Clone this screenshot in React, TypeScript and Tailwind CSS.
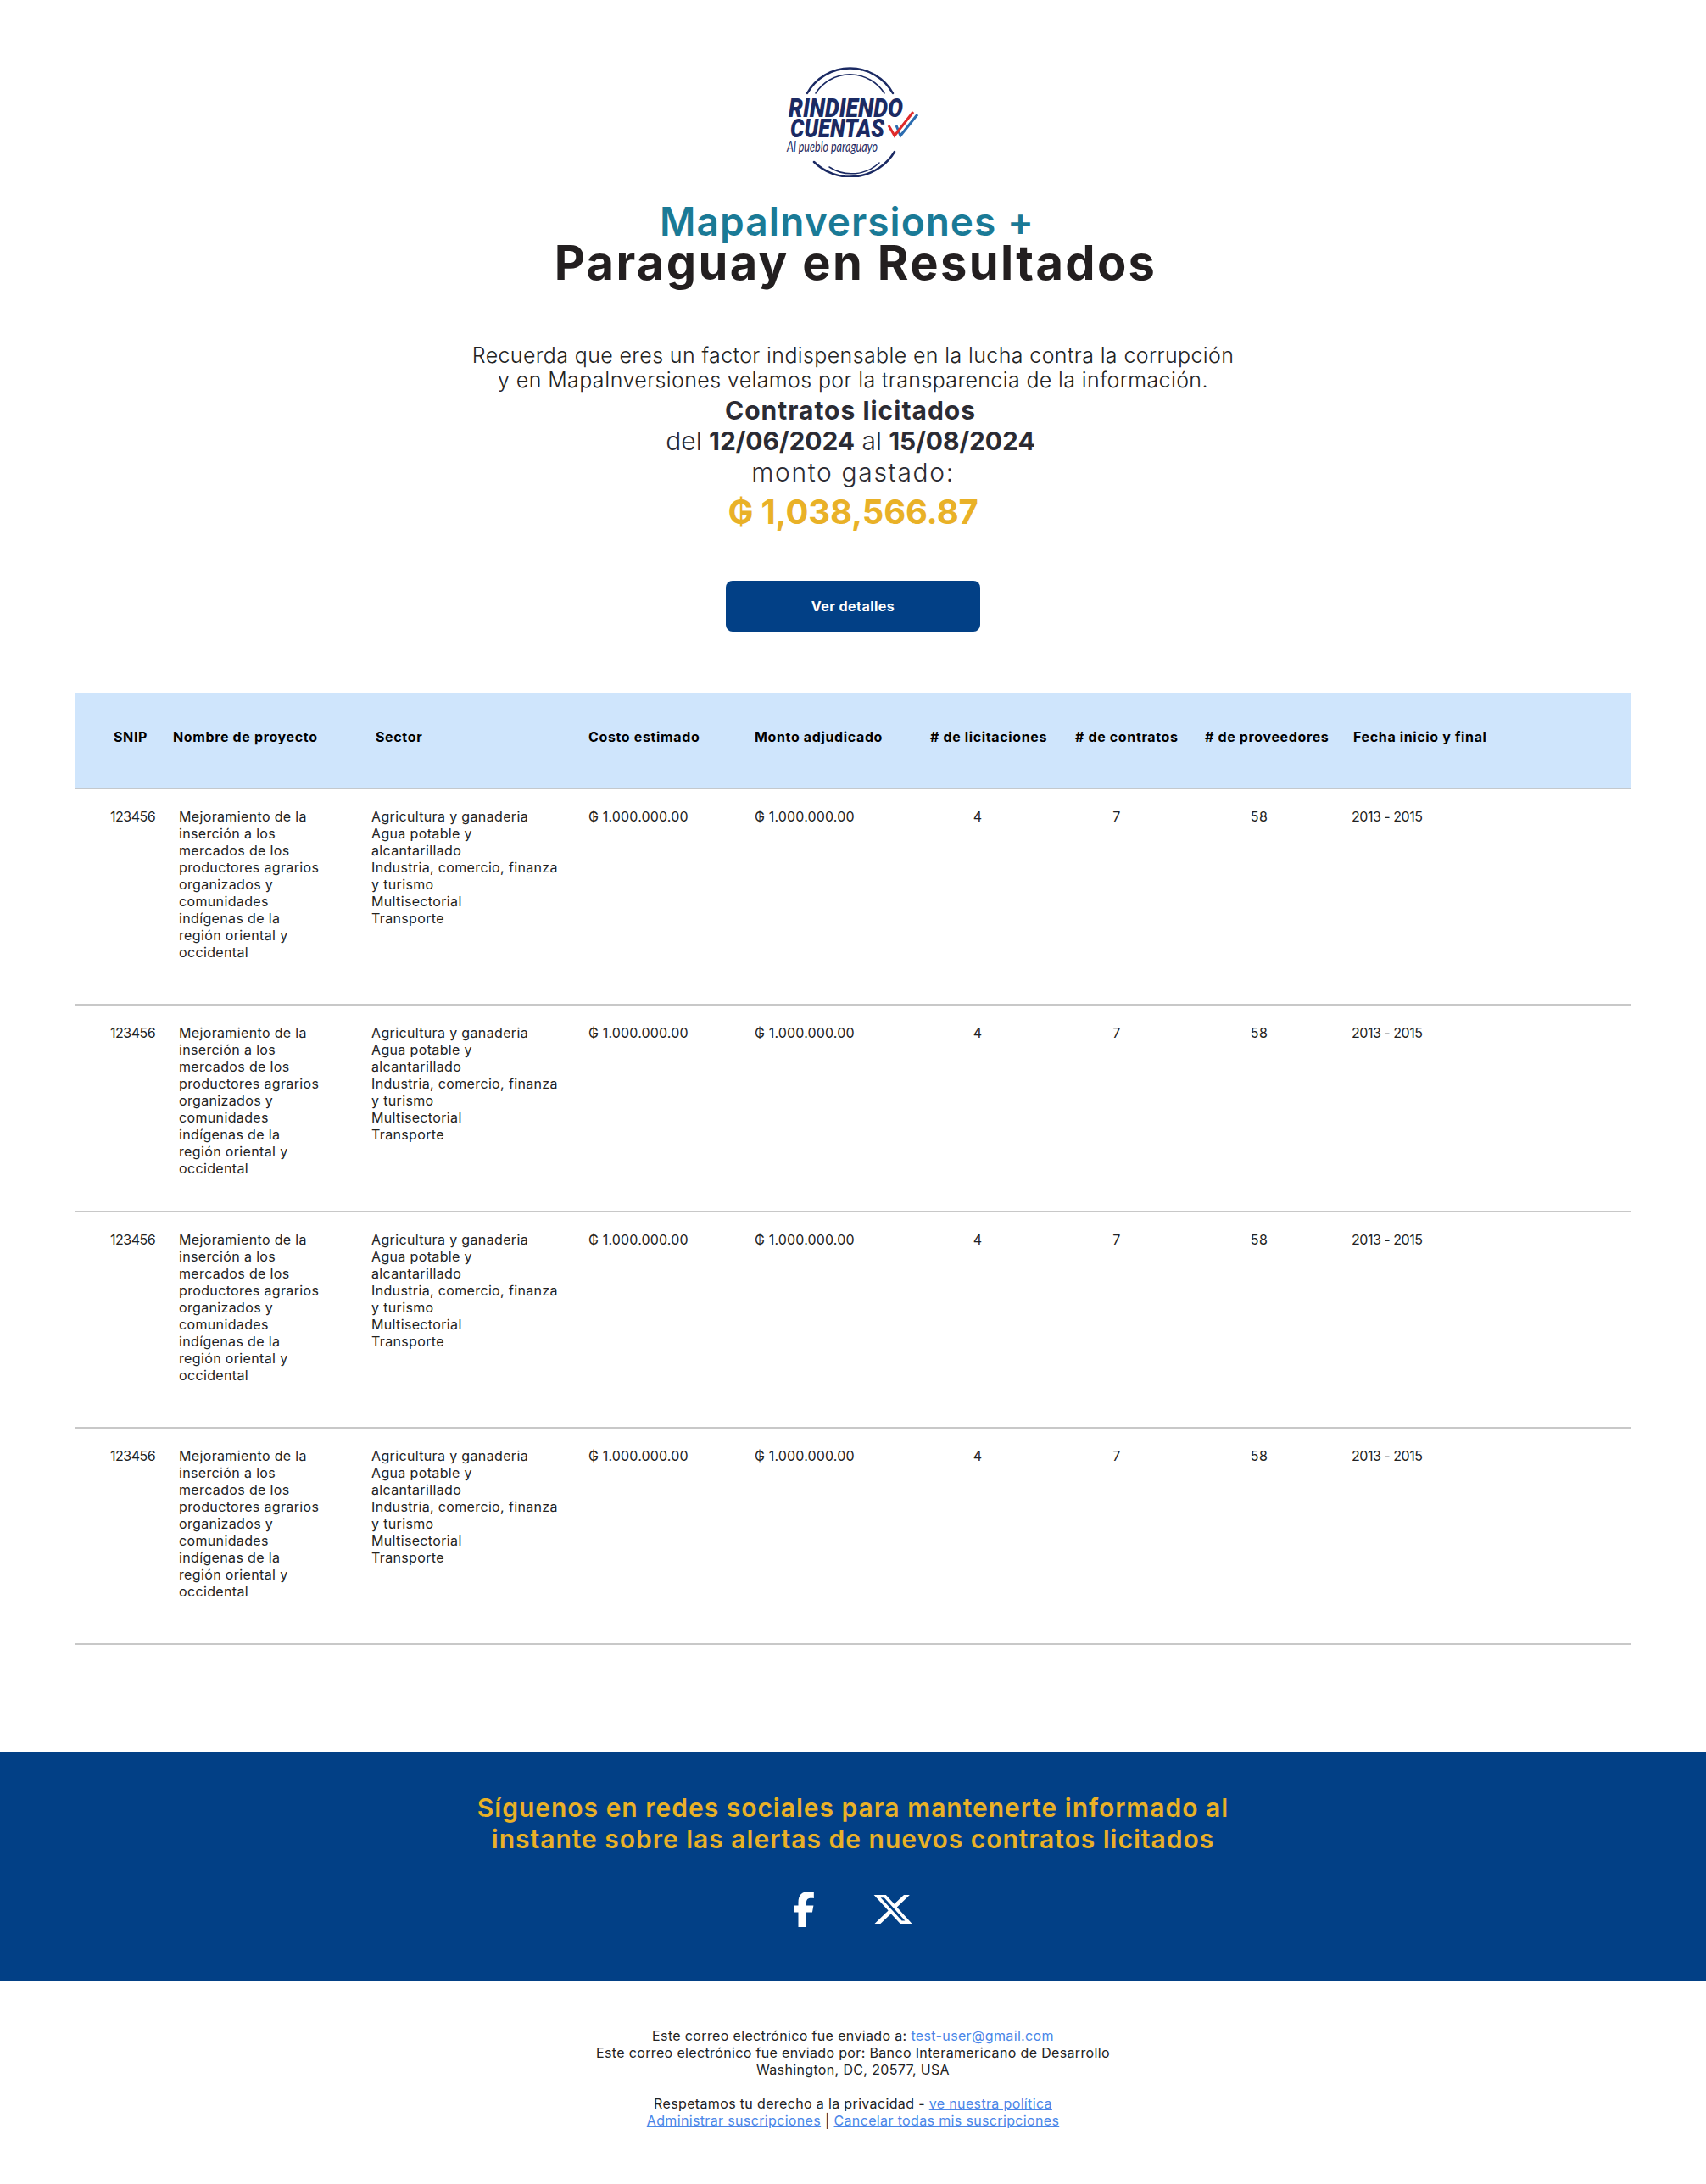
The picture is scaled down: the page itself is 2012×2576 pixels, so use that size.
import { FaFacebookF, FaXTwitter } from 'react-icons/fa6';

const projectLines = [
  'Mejoramiento de la',
  'inserción a los',
  'mercados de los',
  'productores agrarios',
  'organizados y',
  'comunidades',
  'indígenas de la',
  'región oriental y',
  'occidental',
];

const sectorLines = [
  'Agricultura y ganaderia',
  'Agua potable y',
  'alcantarillado',
  'Industria, comercio, finanza',
  'y turismo',
  'Multisectorial',
  'Transporte',
];

const rowHeights = ['h-[255px]', 'h-[244px]', 'h-[255px]', 'h-[255px]'];

const gridCols = 'grid grid-cols-[116px_234px_256px_196px_207px_171px_153px_173px_330px]';

function Logo() {
  return (
    <svg width="180" height="136" viewBox="-10 0 180 136" className="mx-auto block">
      <g fill="none" stroke="#1b2a63" strokeLinecap="round">
        <path d="M26 37 A58 58 0 0 1 127 37" strokeWidth="2.5" />
        <path d="M36 37 A48 48 0 0 1 117 37" strokeWidth="1.5" />
        <path d="M34 118 A61 61 0 0 0 129 106" strokeWidth="2.5" />
        <path d="M52 124 A48 48 0 0 0 111 119" strokeWidth="1.5" />
      </g>
      <g fill="#1b2a63" fontFamily="Roboto, sans-serif" fontWeight="900" fontStyle="italic">
        <text x="4" y="65" fontSize="32" textLength="135" lengthAdjust="spacingAndGlyphs">RINDIENDO</text>
        <text x="6" y="89" fontSize="32" textLength="111" lengthAdjust="spacingAndGlyphs">CUENTAS</text>
      </g>
      <text x="2" y="106" fill="#1b2a63" fontFamily="Lato, sans-serif" fontStyle="italic" fontWeight="400" fontSize="18" textLength="107" lengthAdjust="spacingAndGlyphs">Al pueblo paraguayo</text>
      <path d="M131 75 L136 87 L156 62" fill="none" stroke="#2b6cb0" strokeWidth="3" />
      <path d="M122 75 L129 87 L151 59" fill="none" stroke="#e02b2b" strokeWidth="3" />
    </svg>
  );
}

function TableRow({ height }: { height: string }) {
  return (
    <div className={`${gridCols} ${height} border-b-2 border-[#c8c8c8] pt-[22px] text-[16px] leading-5 tracking-[0.022em] text-[#222]`}>
      <div className="pl-[42px] tracking-[-0.03em]">123456</div>
      <div className="pl-[7px]">
        {projectLines.map((line) => (
          <div key={line}>{line}</div>
        ))}
      </div>
      <div>
        {sectorLines.map((line) => (
          <div key={line}>{line}</div>
        ))}
      </div>
      <div className="tracking-[0.01em]">₲ 1.000.000.00</div>
      <div className="tracking-[0.01em]">₲ 1.000.000.00</div>
      <div className="w-[112px] text-center">4</div>
      <div className="w-[98px] text-center">7</div>
      <div className="w-[128px] text-center">58</div>
      <div className="tracking-[-0.03em]">2013 - 2015</div>
    </div>
  );
}

export default function App() {
  return (
    <div className="min-h-[2576px] bg-white font-['Inter',sans-serif] text-[#222]">
      <header className="pt-[73px] text-center">
        <Logo />
        <h1 className="mt-[29px] pr-[14px] text-[46px] font-semibold leading-[46px] tracking-[0.022em] text-[#1a7a96]">MapaInversiones +</h1>
        <h2 className="pl-[6px] text-[56px] font-bold leading-[52px] tracking-[0.042em] text-[#231f20]">Paraguay en Resultados</h2>
        <p className="mt-[69px] text-[25px] font-light leading-[29px] tracking-[0.015em]">
          Recuerda que eres un factor indispensable en la lucha contra la corrupción
          <br />
          y en MapaInversiones velamos por la transparencia de la información.
        </p>
        <p className="mt-[3px] pr-[6px] text-[30px] font-bold leading-[36px] tracking-[0.033em] text-[#2b2b33]">Contratos licitados</p>
        <p className="pr-[6px] text-[30px] font-light leading-[36px] tracking-[-0.002em] text-[#2b2b33]">
          del <b className="font-bold">12/06/2024</b> al <b className="font-bold">15/08/2024</b>
        </p>
        <p className="mt-[1px] text-[30px] font-light leading-[37px] tracking-[0.055em] text-[#2b2b33]">monto gastado:</p>
        <p className="mt-[3px] text-[40px] font-bold leading-[50px] tracking-[-0.005em] text-[#e9b127]">₲ 1,038,566.87</p>
        <button className="mx-auto mt-[56px] block h-[60px] w-[300px] rounded-lg bg-[#024086] text-[16px] font-bold tracking-[0.03em] text-white">Ver detalles</button>
      </header>

      <section className="mx-[88px] mt-[72px]">
        <div className={`${gridCols} h-[114px] items-center border-b-2 border-[#c4c8cc] bg-[#cfe5fc] pb-[9px] text-[16px] font-bold tracking-[0.04em] text-black`}>
          <div className="pl-[46px]">SNIP</div>
          <div>Nombre de proyecto</div>
          <div className="pl-[5px]">Sector</div>
          <div>Costo estimado</div>
          <div>Monto adjudicado</div>
          <div># de licitaciones</div>
          <div># de contratos</div>
          <div># de proveedores</div>
          <div className="pl-[2px]">Fecha inicio y final</div>
        </div>
        {rowHeights.map((height, i) => (
          <TableRow key={i} height={height} />
        ))}
      </section>

      <section className="mt-[127px] flex h-[269px] flex-col items-center bg-[#024086] pt-[47px]">
        <p className="text-center text-[30px] font-semibold leading-[37px] tracking-[0.033em] text-[#e9b127]">
          Síguenos en redes sociales para mantenerte informado al
          <br />
          instante sobre las alertas de nuevos contratos licitados
        </p>
        <div className="mt-[43px] flex items-center gap-[67px] text-white">
          <a href="#" aria-label="Facebook">
            <FaFacebookF className="h-[42px] w-[26px]" preserveAspectRatio="none" />
          </a>
          <a href="#" aria-label="X">
            <FaXTwitter className="h-[42px] w-[50px]" preserveAspectRatio="none" />
          </a>
        </div>
      </section>

      <footer className="pt-[55px] text-center text-[16px] leading-5 tracking-[0.022em] text-[#222]">
        <p>
          Este correo electrónico fue enviado a: <a href="#" className="text-[#4a86e8] underline">test-user@gmail.com</a>
        </p>
        <p>Este correo electrónico fue enviado por: Banco Interamericano de Desarrollo</p>
        <p>Washington, DC, 20577, USA</p>
        <p className="mt-5">
          Respetamos tu derecho a la privacidad - <a href="#" className="text-[#4a86e8] underline">ve nuestra política</a>
        </p>
        <p>
          <a href="#" className="text-[#4a86e8] underline">Administrar suscripciones</a> | <a href="#" className="text-[#4a86e8] underline">Cancelar todas mis suscripciones</a>
        </p>
      </footer>
    </div>
  );
}
